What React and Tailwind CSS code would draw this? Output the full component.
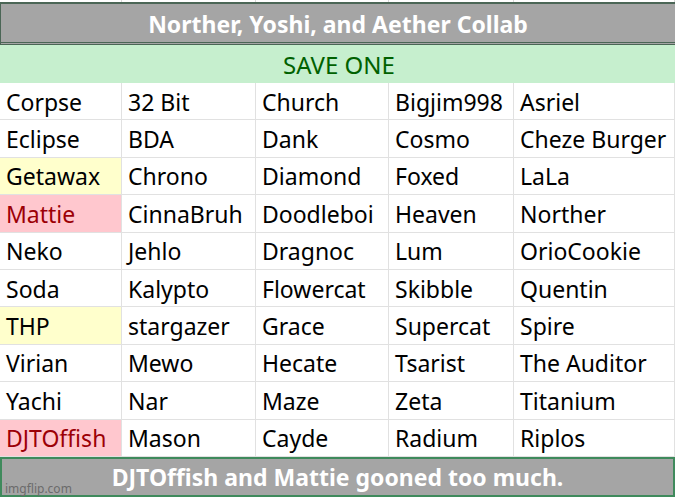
const rows = [
  ["Corpse", "32 Bit", "Church", "Bigjim998", "Asriel"],
  ["Eclipse", "BDA", "Dank", "Cosmo", "Cheze Burger"],
  ["Getawax", "Chrono", "Diamond", "Foxed", "LaLa"],
  ["Mattie", "CinnaBruh", "Doodleboi", "Heaven", "Norther"],
  ["Neko", "Jehlo", "Dragnoc", "Lum", "OrioCookie"],
  ["Soda", "Kalypto", "Flowercat", "Skibble", "Quentin"],
  ["THP", "stargazer", "Grace", "Supercat", "Spire"],
  ["Virian", "Mewo", "Hecate", "Tsarist", "The Auditor"],
  ["Yachi", "Nar", "Maze", "Zeta", "Titanium"],
  ["DJTOffish", "Mason", "Cayde", "Radium", "Riplos"],
];

// first-column highlight per row
const marks = {
  Getawax: "yellow",
  THP: "yellow",
  Mattie: "red",
  DJTOffish: "red",
};

function cellClass(name, i) {
  const m = i === 0 ? marks[name] : null;
  if (m === "yellow") return "bg-[#ffffcc] text-black";
  if (m === "red") return "bg-[#ffc7ce] text-[#9c0006]";
  return "bg-white text-black";
}

export default function App() {
  return (
    <div
      className="relative w-[677px] h-[499px] bg-white overflow-hidden"
      style={{ fontFamily: '"Noto Sans", "Open Sans", sans-serif' }}
    >
      <div className="w-[675px]">
        {/* strip of the row above */}
        <div className="grid grid-cols-[122px_134px_133px_125px_161px] h-[2px]">
          {[0, 1, 2, 3, 4].map((i) => (
            <div key={i} className="border-r border-[#d9d9d9]" />
          ))}
        </div>

        {/* title */}
        <div className="h-[43px] bg-[#a5a5a5] border-t-2 border-b-[3px] border-double border-[#4b6656] border-l border-l-[#4b6656] flex items-center justify-center">
          <span className="text-white font-bold text-[23px] leading-none mt-[2px]">
            Norther, Yoshi, and Aether Collab
          </span>
        </div>

        {/* subtitle */}
        <div className="h-[38px] bg-[#c6efce] flex items-center justify-center">
          <span className="text-[#006100] text-[24px] leading-none mt-[2px] pl-[3px]">
            SAVE ONE
          </span>
        </div>

        {/* names */}
        <div className="grid grid-cols-[122px_134px_133px_125px_161px] grid-rows-10 h-[374px]">
          {rows.map((r) =>
            r.map((name, i) => (
              <div
                key={name}
                className={`flex items-center pl-[6px] pt-[2px] border-r border-b border-[#e1e1e1] text-[23px] leading-none whitespace-nowrap ${cellClass(name, i)}`}
              >
                {name}
              </div>
            ))
          )}
        </div>

        {/* caption */}
        <div className="h-[40px] bg-[#a5a5a5] border-2 border-[#3f8a5c] flex items-center justify-center">
          <span className="text-white font-bold text-[23px] leading-none mt-[1px]">
            DJTOffish and Mattie gooned too much.
          </span>
        </div>
      </div>

      <span className="absolute left-[5px] bottom-[4px] text-[12px] leading-none text-[#6b6b6b]">
        imgflip.com
      </span>
    </div>
  );
}
